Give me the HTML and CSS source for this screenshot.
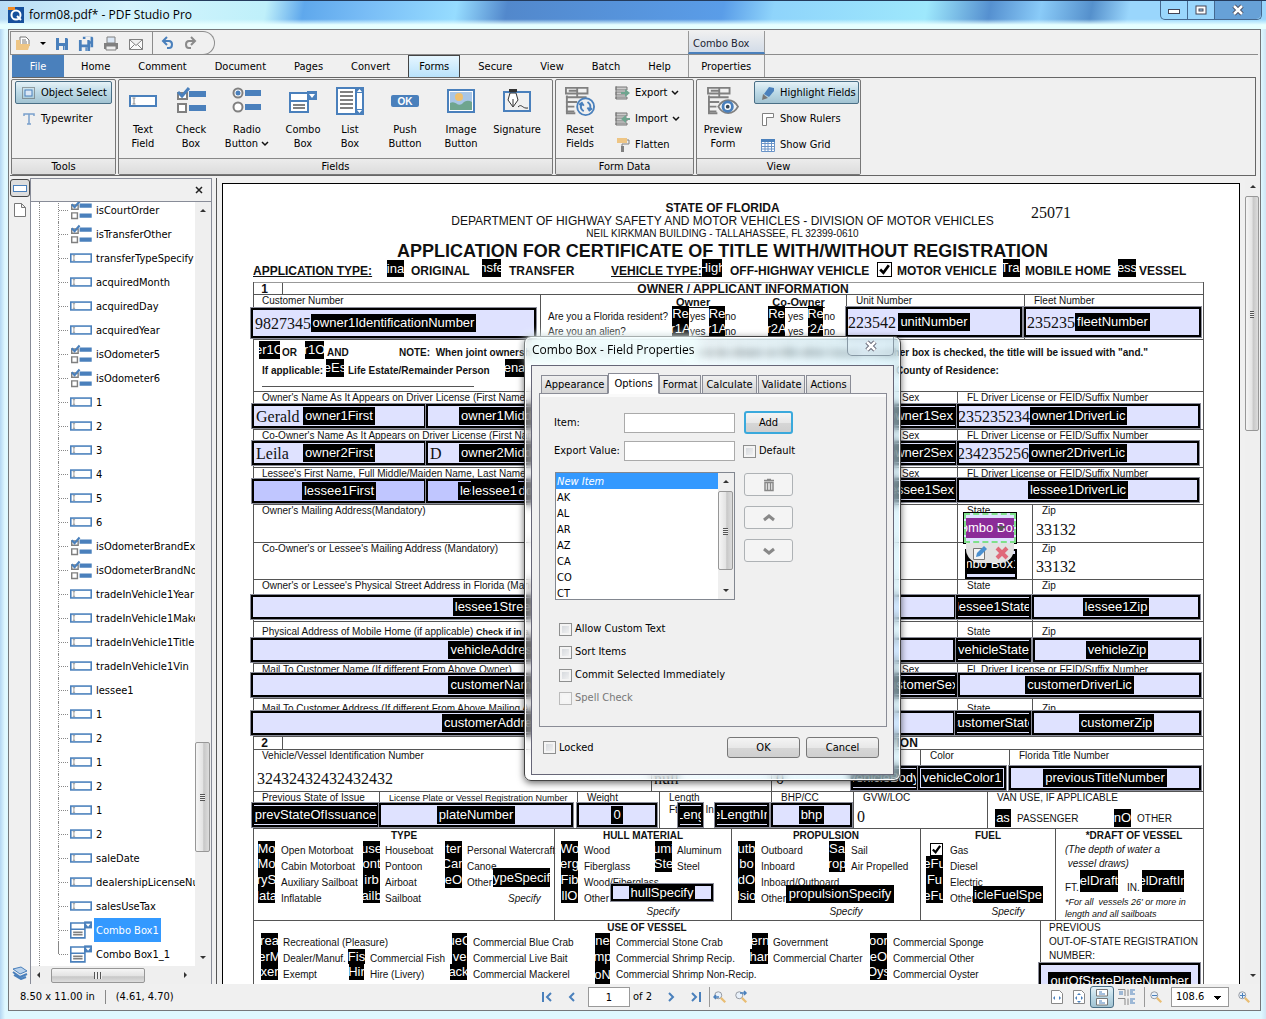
FILE: index.html
```html
<!DOCTYPE html>
<html lang="en">
<head>
    <meta charset="UTF-8">
    <meta name="viewport" content="width=device-width, initial-scale=1.0">
    <title>form08.pdf* - PDF Studio Pro</title>
    <link rel="stylesheet" href="styles.css">
</head>
<body>
    <!-- shared icons -->
    <svg width="0" height="0" class="defs">
        <symbol id="i-text" viewBox="0 0 28 12"><rect x="1" y="1" width="26" height="10" fill="#fff" stroke="#4a80bc" stroke-width="2"/><path d="M3.500 3h3M5 3v6M3.500 9h3" stroke="#888" fill="none"/></symbol>
        <symbol id="i-check" viewBox="0 0 30 28"><path d="M2 7h9v6H2zM2 18h8v8H2z" fill="#fff" stroke="#808080" stroke-width="2"/><path d="M2 6l4 4 7-8" fill="none" stroke="#4a80bc" stroke-width="3"/><path d="M13 5h17v6H13zM13 19h17v6H13z" fill="#4a80bc"/></symbol>
        <symbol id="i-radio" viewBox="0 0 30 28"><circle cx="6" cy="7" r="4.500" fill="#fff" stroke="#808080" stroke-width="2"/><circle cx="6" cy="7" r="2.500" fill="#4a80bc"/><circle cx="6" cy="21" r="4.500" fill="#fff" stroke="#808080" stroke-width="2"/><path d="M13 4h16v6H13zM13 18h16v6H13z" fill="#4a80bc"/></symbol>
        <symbol id="i-combo" viewBox="0 0 28 24"><path d="M1 3h18v19H1zM1 11h18" fill="#fff" stroke="#4a80bc" stroke-width="2"/><path d="M18 1h10v9H18z" fill="#4a80bc"/><path d="M20 4h6l-3 4z" fill="#fff"/><path d="M4 15h12M4 18h12" stroke="#808080" stroke-width="2"/></symbol>
        <symbol id="i-list" viewBox="0 0 28 28"><path d="M1 1h26v26H1zM20 1v26" fill="#fff" stroke="#4a80bc" stroke-width="2"/><path d="M4 5h13M4 9h13M4 13h13M4 17h13M4 21h13" stroke="#808080" stroke-width="2"/><path d="M20 1h7v5h-7zM20 22h7v5h-7z" fill="#4a80bc"/><path d="M21 5l2.500-3L26 5zM21 23l2.500 3L26 23z" fill="#fff"/></symbol>
        <symbol id="i-form" viewBox="0 0 32 32"><path d="M1 2h23v6H1zM1 12h22M1 17h12M1 22h9M1 27h9" fill="none" stroke="#808080" stroke-width="2"/><path d="M4 5h8M13 2v10M2 10v19h9" stroke="#808080" stroke-width="2" fill="none"/></symbol>
        <symbol id="i-io" viewBox="0 0 16 16"><path d="M1 2h11v3H1zM1 7h11v3H1zM1 12h11v2H1zM1 1v13" fill="#ccc" stroke="#777"/></symbol>
        <symbol id="i-chev" viewBox="0 0 8 6"><path d="M1 1l3 3 3-3" fill="none" stroke="#111" stroke-width="1.500"/></symbol>
        <symbol id="i-zoom" viewBox="0 0 16 16"><circle cx="6" cy="6" r="4" fill="#e9f1fa" stroke="#8a8f98"/><path d="M9 9l5 5" stroke="#e9bd73" stroke-width="2.500"/></symbol>
        <symbol id="i-disk" viewBox="0 0 14 14"><path d="M1 1h11l1 1v11H1z" fill="#4a80bc"/><path d="M4 1h6v5H4zM4 9h6v4H4z" fill="#f0f0f0"/><path d="M8 9h1.500v4H8z" fill="#4a80bc"/></symbol>
    </svg>

    <div class="window">
        <header class="titlebar">
            <svg class="logo" width="16" height="16"><rect width="16" height="16" fill="#16509c"/><path d="M0 0h7v3H0z" fill="#f08a24"/><circle cx="8" cy="8" r="4.500" fill="none" stroke="#fff" stroke-width="2"/><path d="M9 9l4 4" stroke="#fff" stroke-width="2"/></svg>
            <span class="caption">form08.pdf* - PDF Studio Pro</span>
            <div class="window-buttons">
                <button type="button" aria-label="Minimize"><svg width="12" height="12"><rect x=".5" y="5.500" width="11" height="4" fill="#fff" stroke="#445"/></svg></button>
                <button type="button" aria-label="Maximize"><svg width="12" height="12"><path d="M2.500 3.500h7v5h-7z" fill="none" stroke="#445" stroke-width="4"/><path d="M2.500 3.500h7v5h-7z" fill="none" stroke="#fff" stroke-width="2"/></svg></button>
                <button type="button" class="win-close" aria-label="Close"><svg width="12" height="12"><path d="M2 2l8 8M10 2l-8 8" stroke="#445" stroke-width="4.500"/><path d="M2 2l8 8M10 2l-8 8" stroke="#fff" stroke-width="2.500"/></svg></button>
            </div>
        </header>

        <div class="client">
            <div class="quickbar">
                <div class="quick-group">
                    <button type="button" aria-label="Open"><svg width="16" height="16"><path d="M5 10V1h6l3 3v6" fill="#fff" stroke="#777"/><path d="M7 4h4M7 6h5M7 8h5" stroke="#777"/><path d="M1 14V4h4v4h10l-2 6z" fill="#eec584"/></svg></button>
                    <button type="button" aria-label="Recent files"><svg width="6" height="4"><path d="M0 0h6L3 3z"/></svg></button>
                    <button type="button" aria-label="Save"><svg width="14" height="14"><use href="#i-disk"/></svg></button>
                    <button type="button" aria-label="Save all"><svg width="16" height="16"><use href="#i-disk" x="4" y="0" width="12" height="12"/><path d="M0 3h12v13H0z" fill="#f0f0f0"/><use href="#i-disk" x="0" y="3" width="13" height="13"/></svg></button>
                    <button type="button" aria-label="Print"><svg width="16" height="16"><path d="M4 1h8v6H4z" fill="#dbe7f5" stroke="#808080"/><path d="M1 7h14v6H1z" fill="#808080"/><path d="M3 10h10v4H3z" fill="#eee" stroke="#808080"/></svg></button>
                    <button type="button" aria-label="E-mail"><svg width="16" height="14"><path d="M1.500 2.500h13v10h-13zM1.500 2.500l6.500 6 6.500-6M1.500 12.500l5-5M14.500 12.500l-5-5" fill="#fafafa" stroke="#808080"/></svg></button>
                </div>
                <div class="quick-group quick-end">
                    <button type="button" aria-label="Undo"><svg width="16" height="14"><path d="M3 5h6c4 0 4 7 0 7H7M7 1L3 5l4 4" fill="none" stroke="#4a80bc" stroke-width="2"/></svg></button>
                    <button type="button" aria-label="Redo"><svg width="16" height="14"><path d="M12 5H6c-4 0-4 7 0 7h2M8 1l4 4-4 4" fill="none" stroke="#8a8a8a" stroke-width="2"/></svg></button>
                </div>
                <div class="context-title">Combo Box</div>
            </div>

            <nav class="tabs">
                <button type="button" class="tab file">File</button>
                <button type="button" class="tab">Home</button>
                <button type="button" class="tab">Comment</button>
                <button type="button" class="tab">Document</button>
                <button type="button" class="tab">Pages</button>
                <button type="button" class="tab">Convert</button>
                <button type="button" class="tab active">Forms</button>
                <button type="button" class="tab">Secure</button>
                <button type="button" class="tab">View</button>
                <button type="button" class="tab">Batch</button>
                <button type="button" class="tab">Help</button>
                <button type="button" class="tab context">Properties</button>
            </nav>

            <div class="ribbon">
                <section class="group tools">
                    <div class="group-body stack">
                        <button type="button" class="small pressed"><svg width="16" height="14"><rect x="1.500" y="1.500" width="12" height="11" fill="none" stroke="#555" stroke-dasharray="1 1"/><rect x="4" y="4" width="7" height="6" fill="#dbe7f5" stroke="#4a80bc"/></svg>Object Select</button>
                        <button type="button" class="small"><svg width="16" height="14"><path d="M3 4V2h10v2M8 2v10M6 12h4" fill="none" stroke="#7aa0cc" stroke-width="1.500"/></svg>Typewriter</button>
                    </div>
                    <h2>Tools</h2>
                </section>
                <section class="group fields">
                    <div class="group-body">
                        <button type="button" class="big"><svg width="28" height="30"><use href="#i-text" y="9" width="28" height="12"/></svg>Text<br>Field</button>
                        <button type="button" class="big"><svg width="30" height="30"><use href="#i-check" width="30" height="28"/></svg>Check<br>Box</button>
                        <button type="button" class="big wide"><svg width="30" height="30"><use href="#i-radio" width="30" height="28"/></svg>Radio<br>Button <svg class="chev" width="8" height="6"><use href="#i-chev"/></svg></button>
                        <button type="button" class="big"><svg width="28" height="30"><use href="#i-combo" y="4" width="28" height="24"/></svg>Combo<br>Box</button>
                        <button type="button" class="big narrow"><svg width="28" height="30"><use href="#i-list" width="28" height="28" y="1"/></svg>List<br>Box</button>
                        <button type="button" class="big wide"><svg width="28" height="30"><rect y="9" width="28" height="12" rx="2" fill="#4a80bc"/><text x="14" y="19" text-anchor="middle" class="ok-text">OK</text></svg>Push<br>Button</button>
                        <button type="button" class="big"><svg width="28" height="30"><rect x="1" y="4" width="26" height="22" fill="#fff" stroke="#4a80bc" stroke-width="2"/><path d="M3 6h22v18H3z" fill="#a9c6e6"/><circle cx="12" cy="11" r="4" fill="#eec070"/><path d="M3 17c6-3 7 4 12 1 3-4 7-4 10-2v8H3z" fill="#6fa58f"/></svg>Image<br>Button</button>
                        <button type="button" class="big wide"><svg width="30" height="30"><rect x="2" y="6" width="26" height="19" fill="none" stroke="#4a80bc" stroke-width="2"/><path d="M7 3h8v3H7z" fill="#333"/><path d="M8 7h6l2 7-5 7-5-7z" fill="#fff" stroke="#333"/><path d="M11 20v-7M16 21c4-4 4 2 10 1" fill="none" stroke="#333"/></svg>Signature</button>
                    </div>
                    <h2>Fields</h2>
                </section>
                <section class="group form-data">
                    <div class="group-body">
                        <button type="button" class="big"><svg width="32" height="30" viewBox="0 0 32 32"><use href="#i-form" width="32" height="32"/><circle cx="22" cy="22" r="9" fill="#f0f0f0" stroke="#4a80bc" stroke-width="2"/><path d="M20 27c-3-2-4-5-2-8M15 20l3-2 2 3M24 17c3 2 4 5 2 8M29 24l-3 2-2-3" fill="none" stroke="#4a80bc" stroke-width="2"/></svg>Reset<br>Fields</button>
                        <div class="stack">
                            <button type="button" class="small"><svg width="16" height="16"><use href="#i-io"/><path d="M6 7h4V4l5 4-5 4V9H6z" fill="#6fa58f"/></svg>Export <svg class="chev" width="8" height="6"><use href="#i-chev"/></svg></button>
                            <button type="button" class="small"><svg width="16" height="16"><use href="#i-io"/><path d="M15 7h-4V4L6 8l5 4V9h4z" fill="#6fa58f"/></svg>Import <svg class="chev" width="8" height="6"><use href="#i-chev"/></svg></button>
                            <button type="button" class="small"><svg width="16" height="16"><path d="M2 1h10v5H2z" fill="#eec584"/><path d="M12 3h2v4H7v3" fill="none" stroke="#808080"/><path d="M6 9h3v6H6z" fill="#808080"/></svg>Flatten</button>
                        </div>
                    </div>
                    <h2>Form Data</h2>
                </section>
                <section class="group view">
                    <div class="group-body">
                        <button type="button" class="big"><svg width="34" height="30" viewBox="0 0 34 32"><use href="#i-form" width="32" height="32"/><path d="M12 22c5-9 16-9 21 0-5 9-16 9-21 0z" fill="#f4f4f4" stroke="#808080" stroke-width="2"/><circle cx="22" cy="22" r="5" fill="#fff" stroke="#4a80bc" stroke-width="3"/><circle cx="22" cy="22" r="2" fill="#345"/></svg>Preview<br>Form</button>
                        <div class="stack">
                            <button type="button" class="small pressed"><svg width="16" height="16"><path d="M9 2l5 1v3l-5 6-5-3z" fill="#4a80bc"/><path d="M3 9l5 4-6 2z" fill="#777"/></svg>Highlight Fields</button>
                            <button type="button" class="small"><svg width="16" height="16"><path d="M2.500 14.500v-12h11v4h-7v8z" fill="#fff" stroke="#808080"/></svg>Show Rulers</button>
                            <button type="button" class="small"><svg width="16" height="16"><path d="M1.500 2.500h13v12h-13zM1.500 6.500h13M1.500 9.500h13M1.500 12h13M5 5v9M8 5v9M11.500 5v9" fill="#fff" stroke="#6a94c8"/><path d="M1 2h14v3H1z" fill="#4a80bc"/></svg>Show Grid</button>
                        </div>
                    </div>
                    <h2>View</h2>
                </section>
            </div>

            <main class="workspace">
                <aside class="strip">
                    <button type="button" class="strip-active" aria-label="Fields"><svg width="14" height="7"><rect x=".5" y=".5" width="13" height="6" fill="#fff" stroke="#4a80bc"/></svg></button>
                    <button type="button" aria-label="Pages"><svg width="12" height="14"><path d="M.5.500h7l4 4v9H.5zM7.500.500v4h4" fill="#fff" stroke="#777"/></svg></button>
                    <button type="button" class="strip-last" aria-label="Layers"><svg width="16" height="14"><path d="M1 3l8-2 6 4-7 3z" fill="#b9d2ec" stroke="#4a80bc"/><path d="M1 6l7 5 7-3M2 9l7 4 5-2" fill="none" stroke="#4a80bc" stroke-width="2"/></svg></button>
                </aside>

                <div class="panel">
                    <div class="panel-head"><button type="button" aria-label="Close panel"><svg width="8" height="8"><path d="M1 1l6 6M7 1L1 7" stroke="#222" stroke-width="1.500"/></svg></button></div>
                    <div class="panel-body">
                        <ul class="tree" id="tree"></ul>
                        <div class="vbar"><i class="up"></i><i class="thumb tree-thumb"></i><i class="down"></i></div>
                    </div>
                    <div class="hbar"><i class="left"></i><i class="thumb"></i><i class="right"></i></div>
                </div>

                <div class="viewer">
                    <div class="page" id="page">
                        <div class="page-head">
                            <p class="state">STATE OF FLORIDA</p>
                            <p class="dept">DEPARTMENT OF HIGHWAY SAFETY AND MOTOR VEHICLES - DIVISION OF MOTOR VEHICLES</p>
                            <p class="addr">NEIL KIRKMAN BUILDING - TALLAHASSEE, FL 32399-0610</p>
                            <h1>APPLICATION FOR CERTIFICATE OF TITLE WITH/WITHOUT REGISTRATION</h1>
                        </div>
                        <div class="type-line">
                            <u>APPLICATION TYPE:</u><span>ORIGINAL</span><span>TRANSFER</span><u>VEHICLE TYPE:</u>
                            <span>OFF-HIGHWAY VEHICLE</span><span>MOTOR VEHICLE</span><span>MOBILE HOME</span><span>VESSEL</span>
                        </div>
                        <div class="form">
                            <div class="row section"><b>1</b><b>OWNER / APPLICANT INFORMATION</b></div>
                            <div class="row ids">
                                <div>Customer Number</div>
                                <div class="questions">
                                    <div class="q-head"><u>Owner</u><u>Co-Owner</u></div>
                                    <div class="q"><span>Are you a Florida resident?</span><span>yes</span><span>no</span><span>yes</span><span>no</span></div>
                                    <div class="q"><span>Are you an alien?</span><span>yes</span><span>no</span><span>yes</span><span>no</span></div>
                                </div>
                                <div>Unit Number</div>
                                <div>Fleet Number</div>
                            </div>
                            <div class="row notes">
                                <p><span>OR</span><span>AND</span><span>NOTE:&nbsp; When joint ownership, please indicate if "or" or "and" is to be shown on title when issued. If neither box is checked, the title will be issued with "and."</span></p>
                                <p><span>If applicable:</span><span>Life Estate/Remainder Person</span><span>County of Residence:</span></p>
                                <hr>
                            </div>
                            <div class="row owner"><div>Owner's Name As It Appears on Driver License (First Name, Full Middle/Maiden Name, Last Name)</div><div class="bare">Sex</div><div>FL Driver License or FEID/Suffix Number</div></div>
                            <div class="row owner"><div>Co-Owner's Name As It Appears on Driver License (First Name, Full Middle Name)</div><div class="bare">Sex</div><div>FL Driver License or FEID/Suffix Number</div></div>
                            <div class="row owner"><div>Lessee's First Name, Full Middle/Maiden Name, Last Name</div><div class="bare">Sex</div><div>FL Driver License or FEID/Suffix Number</div></div>
                            <div class="row address"><div>Owner's Mailing Address(Mandatory)</div><div>State</div><div>Zip</div></div>
                            <div class="row address"><div>Co-Owner's or Lessee's Mailing Address (Mandatory)</div><div>State</div><div>Zip</div></div>
                            <div class="row address"><div>Owner's or Lessee's Physical Street Address in Florida (Mandatory)</div><div>State</div><div>Zip</div></div>
                            <div class="row address low"><div>Physical Address of Mobile Home (if applicable) <b class="condensed">Check if in a park</b></div><div>State</div><div>Zip</div></div>
                            <div class="row owner"><div>Mail To Customer Name (If different From Above Owner)</div><div class="bare">Sex</div><div>FL Driver License or FEID/Suffix Number</div></div>
                            <div class="row address low"><div>Mail To Customer Address (If different From Above Mailing Address)</div><div>State</div><div>Zip</div></div>
                            <div class="row section"><b>2</b><b>MOTOR VEHICLE, MOBILE HOME OR VESSEL DESCRIPTION</b></div>
                            <div class="row vin"><div>Vehicle/Vessel Identification Number</div><div>Make</div><div>Year</div><div>Color</div><div>Florida Title Number</div></div>
                            <div class="row plate">
                                <div>Previous State of Issue</div><div class="tight">License Plate or Vessel Registration Number</div><div>Weight</div>
                                <div>Length<br>Ft. <span class="inches">In.</span></div><div>BHP/CC</div><div>GVW/LOC</div>
                                <div>VAN USE, IF APPLICABLE<p class="van"><span>PASSENGER</span><span>OTHER</span></p></div>
                            </div>
                            <div class="row vessel">
                                <div><h3>TYPE</h3>
                                    <div class="options type">
                                        <ul><li>Open Motorboat</li><li>Cabin Motorboat</li><li>Auxiliary Sailboat</li><li>Inflatable</li></ul>
                                        <ul><li>Houseboat</li><li>Pontoon</li><li>Airboat</li><li>Sailboat</li></ul>
                                        <ul><li>Personal Watercraft</li><li>Canoe</li><li>Other</li><li class="specify">Specify</li></ul>
                                    </div>
                                </div>
                                <div><h3>HULL MATERIAL</h3>
                                    <div class="options hull">
                                        <ul><li>Wood</li><li>Fiberglass</li><li>Wood/Fiberglass</li><li>Other</li></ul>
                                        <ul><li>Aluminum</li><li>Steel</li></ul>
                                    </div>
                                    <p class="specify">Specify</p>
                                </div>
                                <div><h3>PROPULSION</h3>
                                    <div class="options propulsion">
                                        <ul><li>Outboard</li><li>Inboard</li><li>Inboard/Outboard</li><li>Other</li></ul>
                                        <ul><li>Sail</li><li>Air Propelled</li></ul>
                                    </div>
                                    <p class="specify">Specify</p>
                                </div>
                                <div><h3>FUEL</h3>
                                    <div class="options"><ul><li>Gas</li><li>Diesel</li><li>Electric</li><li>Other</li></ul></div>
                                    <p class="specify">Specify</p>
                                </div>
                                <div class="draft"><h3>*DRAFT OF VESSEL</h3>
                                    <p>(The depth of water a<br>&nbsp;vessel draws)</p>
                                    <p class="ft"><span>FT.</span><span>IN.</span></p>
                                    <small>*For all&nbsp; vessels 26' or more in<br>length and all sailboats</small>
                                </div>
                            </div>
                            <div class="row use">
                                <div><h3>USE OF VESSEL</h3>
                                    <div class="options uses">
                                        <ul><li>Recreational (Pleasure)</li><li>Dealer/Manuf.</li><li>Exempt</li></ul>
                                        <ul><li>&nbsp;</li><li>Commercial Fish</li><li>Hire (Livery)</li></ul>
                                        <ul><li>Commercial Blue Crab</li><li>Commercial Live Bait</li><li>Commercial Mackerel</li></ul>
                                        <ul><li>Commercial Stone Crab</li><li>Commercial Shrimp Recip.</li><li>Commercial Shrimp Non-Recip.</li></ul>
                                        <ul><li>Government</li><li>Commercial Charter</li></ul>
                                        <ul><li>Commercial Sponge</li><li>Commercial Other</li><li>Commercial Oyster</li></ul>
                                    </div>
                                </div>
                                <div class="previous">PREVIOUS<br>OUT-OF-STATE REGISTRATION<br>NUMBER:</div>
                            </div>
                        </div>
                    </div>
                </div>
                <div class="vbar page-bar"><i class="up"></i><i class="thumb page-thumb"></i><i class="down"></i></div>
            </main>

            <footer class="status">
                <div class="status-left"><span>8.50 x 11.00 in</span><span class="coords">(4.61, 4.70)</span></div>
                <div class="status-nav">
                    <button type="button" aria-label="First page"><svg width="12" height="12"><path d="M2 1v10M10 2L6 6l4 4" fill="none" stroke="#4a80bc" stroke-width="2"/></svg></button>
                    <button type="button" aria-label="Previous page"><svg width="12" height="12"><path d="M8 2L4 6l4 4" fill="none" stroke="#4a80bc" stroke-width="2"/></svg></button>
                    <input type="text" value="1" id="page-number" aria-label="Page"><label for="page-number">of 2</label>
                    <button type="button" aria-label="Next page"><svg width="12" height="12"><path d="M4 2l4 4-4 4" fill="none" stroke="#4a80bc" stroke-width="2"/></svg></button>
                    <button type="button" aria-label="Last page"><svg width="12" height="12"><path d="M10 1v10M2 2l4 4-4 4" fill="none" stroke="#4a80bc" stroke-width="2"/></svg></button>
                    <button type="button" class="sep" aria-label="Previous view"><svg width="14" height="14"><use href="#i-zoom" width="14" height="14"/><path d="M6 7H1m2-2L1 7l2 2" fill="none" stroke="#4a80bc" stroke-width="1.500"/></svg></button>
                    <button type="button" aria-label="Next view"><svg width="14" height="14"><use href="#i-zoom" width="14" height="14"/><path d="M6 3h6m-2-2l2 2-2 2" fill="none" stroke="#4a80bc" stroke-width="1.500"/></svg></button>
                </div>
                <div class="status-view">
                    <button type="button" aria-label="Fit width"><svg width="14" height="16"><path d="M1.500 1.500h8l3 3v10h-11z" fill="#fff" stroke="#888"/><path d="M3 9l2-2v4zM11 9L9 7v4z" fill="#4a80bc"/></svg></button>
                    <button type="button" aria-label="Fit page"><svg width="14" height="16"><path d="M1.500 1.500h8l3 3v10h-11z" fill="#fff" stroke="#888"/><path d="M3 9l2-2v4zM11 9L9 7v4zM7 4L5 6h4zM7 14l-2-2h4z" fill="#4a80bc"/></svg></button>
                    <button type="button" class="pressed" aria-label="Continuous"><svg width="14" height="18"><path d="M1.500 8V1.500h11V8zM1.500 17v-6.500h11V17z" fill="#fff" stroke="#777"/><path d="M4 4h3M4 6h6M4 13h3M4 15h6" stroke="#4a80bc"/></svg></button>
                    <button type="button" aria-label="Facing pages"><svg width="18" height="18"><path d="M0 1.500h7V8M10 8V1.500M0 10.500h7V17M10 17v-6.500" fill="none" stroke="#888"/><path d="M1 4h4M1 6h4M12 2h5M12 4h3M12 6h5M12 11h5M12 13h3M12 15h5" stroke="#4a80bc"/></svg></button>
                    <button type="button" class="sep" aria-label="Zoom out"><svg width="14" height="14"><use href="#i-zoom" width="14" height="14"/><path d="M3 5.500h5" stroke="#4a80bc"/></svg></button>
                    <select aria-label="Zoom"><option>108.6</option></select>
                    <button type="button" aria-label="Zoom in"><svg width="14" height="14"><use href="#i-zoom" width="14" height="14"/><path d="M3 5.500h5M5.500 3v5" stroke="#4a80bc"/></svg></button>
                </div>
            </footer>
        </div>

        <form class="dialog" role="dialog" aria-labelledby="dialog-title">
            <header><span id="dialog-title">Combo Box - Field Properties</span><button type="button" aria-label="Close"><svg width="12" height="12"><path d="M2 2l8 8M10 2l-8 8" stroke="#556" stroke-width="4.500"/><path d="M2 2l8 8M10 2l-8 8" stroke="#fff" stroke-width="2.500"/></svg></button></header>
            <div class="dialog-body">
                <div class="dialog-tabs">
                    <button type="button">Appearance</button><button type="button" class="current">Options</button><button type="button">Format</button><button type="button">Calculate</button><button type="button">Validate</button><button type="button">Actions</button>
                </div>
                <div class="dialog-panel">
                    <div class="item-grid">
                        <label for="item">Item:</label><input type="text" id="item"><button type="button" class="btn primary">Add</button>
                        <label for="export">Export Value:</label><input type="text" id="export"><label class="tick"><input type="checkbox">Default</label>
                    </div>
                    <div class="list-area">
                        <div class="listbox">
                            <ul><li class="new">New Item</li><li>AK</li><li>AL</li><li>AR</li><li>AZ</li><li>CA</li><li>CO</li><li>CT</li></ul>
                            <div class="vbar"><i class="up"></i><i class="thumb list-thumb"></i><i class="down"></i></div>
                        </div>
                        <div class="list-buttons">
                            <button type="button" class="btn" disabled aria-label="Delete"><svg width="12" height="14"><path d="M1 2.500h10M4 1.500h4M2 4.500h8v8H2zM4.500 5v7M7.500 5v7" fill="none" stroke="#888" stroke-width="1.500"/></svg></button>
                            <button type="button" class="btn" disabled aria-label="Move up"><svg width="14" height="10"><path d="M2 7l5-4 5 4" fill="none" stroke="#888" stroke-width="3"/></svg></button>
                            <button type="button" class="btn" disabled aria-label="Move down"><svg width="14" height="10"><path d="M2 3l5 4 5-4" fill="none" stroke="#888" stroke-width="3"/></svg></button>
                        </div>
                    </div>
                    <div class="checks">
                        <label class="tick"><input type="checkbox">Allow Custom Text</label>
                        <label class="tick"><input type="checkbox">Sort Items</label>
                        <label class="tick"><input type="checkbox">Commit Selected Immediately</label>
                        <label class="tick off"><input type="checkbox" disabled>Spell Check</label>
                    </div>
                </div>
                <div class="dialog-foot">
                    <label class="tick"><input type="checkbox">Locked</label>
                    <button type="button" class="btn">OK</button><button type="button" class="btn">Cancel</button>
                </div>
            </div>
        </form>
    </div>
    <script src="script.js"></script>
</body>
</html>
```
FILE: styles.css
```css
* { box-sizing: border-box; }
body { margin: 0; font: 11px/14px "DejaVu Sans Condensed", "Liberation Sans", sans-serif; color: #000; }
button, input, select { font: inherit; color: inherit; margin: 0; }
button { background: none; border: 0; padding: 0; }
ul, p, h1, h2, h3 { margin: 0; padding: 0; list-style: none; }
svg { display: block; flex: none; }
.defs { position: absolute; }

/* window frame */
.window { position: relative; height: 100vh; overflow: hidden; display: flex; flex-direction: column; padding: 0 5px 8px 8px; border-top: 1px solid #243b5c; background: linear-gradient(90deg, #b4d6f2, #dff8ff 5px, #dff8ff calc(100% - 5px), #cfe6f5); }
.titlebar { display: flex; align-items: center; flex: none; height: 28px; margin: 0 -5px 0 -8px; padding-left: 8px; background: linear-gradient(180deg, transparent 65%, #e6ffff 85%), linear-gradient(100deg, #b8dcf5 0, #d5f4fd 10%, #bff0fa 21%, #5fa8ec 24%, #79bdf6 29%, #96dcff 36%, #5288cc 40%, #5a9de8 57%, #8fd4fb 61%, #9ee8fc 73%, #5590d0 78%, #8acbf8 82%, #5590cc 86%, #9ad6fc 89%, #9ad6fc 100%); }
.caption { font: 12px/16px "Open Sans", sans-serif; padding: 0 5px; flex: 1; }
.window-buttons { display: flex; align-self: flex-start; margin-right: 4px; border: 1px solid #45688f; border-top: 0; border-radius: 0 0 5px 5px; }
.window-buttons button { display: flex; align-items: center; justify-content: center; width: 27px; height: 18px; border-right: 1px solid #45688f; }
.window-buttons .win-close { width: 46px; border: 0; background: rgba(70, 125, 190, .6); border-radius: 0 0 5px 0; }
.client { flex: 1; min-height: 0; display: flex; flex-direction: column; background: #f0f0f0; border: 1px solid #74777a; }

/* quick access bar */
.quickbar { display: flex; align-items: flex-start; height: 25px; flex: none; margin: 0 2px 0 1px; border-bottom: 1px solid #8c8c8c; padding-top: 1px; }
.quick-group { display: flex; align-items: center; height: 24px; gap: 9px; padding: 0 8px 0 4px; border: 1px solid #8c8c8c; border-width: 1px 1px 0; }
.quick-end { border-left: 0; border-radius: 0 12px 12px 0; padding: 0 15px 0 7px; gap: 7px; border-bottom-width: 1px; }
.context-title { margin-left: 473px; width: 77px; height: 23px; padding: 6px 4px 0; color: #1d2433; background: linear-gradient(#f0f0f0, #d3dce8); border: 1px solid #999; border-width: 0 1px 2px; border-bottom-color: #4a80bc; }

.tabs { display: flex; height: 23px; flex: none; align-items: flex-end; margin: 0 4px 0 3px; border-bottom: 1px solid #666; }
.tab { height: 22px; padding: 2px 14px 0; }
.tab.file { width: 52px; margin-right: 3px; color: #fff; background: #4a80bc; }
.tab.active { padding: 1px 10px 0; margin: 0 4px; border: 1px solid #444; border-bottom: 0; background: linear-gradient(#e6f6ff, #b9e2fb); }
.tab.context { width: 77px; margin-left: 3px; padding: 2px 0 0; border: 1px solid #999; border-width: 0 1px; }

.ribbon { display: flex; gap: 2px; height: 98px; flex: none; padding: 1px 0 0 1px; margin: 0 4px 0 1px; border-right: 1px solid #666; border-bottom: 1px solid #666; }
.group { display: flex; flex-direction: column; height: 96px; border: 1px solid #777; border-radius: 2px; }
.group-body { display: flex; flex: 1; align-items: flex-start; }
.group h2 { font: inherit; text-align: center; height: 16px; line-height: 16px; border-top: 1px solid #888; background: linear-gradient(#ececec, #dcdcdc); }
.tools { width: 105px; }
.fields { width: 435px; }
.form-data { width: 139px; }
.view { width: 165px; }
.stack { display: flex; flex-direction: column; align-items: flex-start; padding: 1px 0 0 3px; gap: 3px; }
.group-body > .stack { padding-left: 5px; }
.small { display: flex; align-items: center; gap: 4px; height: 23px; padding: 0 4px 0 5px; border: 1px solid transparent; border-radius: 2px; white-space: nowrap; }
.pressed { border-color: #4a6f86; background: linear-gradient(#e6f2f7, #bcd9e6 50%, #a2c3d2); }
.view .small { padding-right: 2px; }
.big { flex: none; width: 48px; padding-top: 6px; text-align: center; line-height: 14px; }
.big > svg { margin: 0 auto 7px; }
.big.wide { width: 64px; }
.big.narrow { width: 46px; }
.view .big { width: 52px; }
.big > svg.chev, .chev { display: inline; height: 6px; margin: 0; }
.ok-text { font: bold 10px "Liberation Sans", sans-serif; fill: #fff; }

/* workspace */
.workspace { flex: 1; min-height: 0; display: flex; padding-top: 2px; }
.strip { width: 21px; display: flex; flex-direction: column; align-items: center; gap: 6px; padding-top: 1px; }
.strip-active { width: 20px; height: 18px; padding: 0 2px; border: 1px solid #444; border-radius: 3px; background: #ddd; }
.strip-last { margin: auto 0 4px; }
.panel { width: 182px; display: flex; flex-direction: column; border: 1px solid #888c98; border-bottom: 0; }
.panel-head { display: flex; justify-content: flex-end; align-items: center; height: 23px; padding-right: 8px; border-bottom: 1px solid #888c98; }
.panel-body { flex: 1; min-height: 0; display: flex; background: #fff; }
.tree { flex: 1; min-width: 0; overflow: hidden; margin-left: 8px; border-left: 1px dotted #888; }
.tree li { display: flex; align-items: center; height: 24px; margin-left: 18px; border-left: 1px dotted #888; white-space: nowrap; }
.tree li:first-child { margin-top: -4px; }
.tree li::before { content: ""; flex: none; width: 9px; border-top: 1px dotted #888; margin-right: 2px; }
.tree li svg { width: 22px; height: 20px; margin-right: 2px; }
.tree li span { padding: 6px 2px 4px; }
.tree li.selected span { color: #fff; background: #3399ff; }
.tree li:last-child { border-image: linear-gradient(#888 50%, transparent 50%) 1; }

.vbar, .hbar { display: flex; align-items: center; justify-content: space-between; background: #efefef; }
.vbar { position: relative; flex-direction: column; width: 16px; padding: 7px 0; }
.hbar { position: relative; height: 18px; padding: 0 24px 0 6px; }
.vbar i, .hbar i { display: block; }
.up { border: 3px solid transparent; border-top: 0; border-bottom-color: #333; }
.down { border: 3px solid transparent; border-bottom: 0; border-top-color: #333; }
.left { border: 3px solid transparent; border-left: 0; border-right-color: #333; }
.right { border: 3px solid transparent; border-right: 0; border-left-color: #333; }
.thumb { border: 1px solid #979797; border-radius: 2px; background: linear-gradient(90deg, #f5f5f5, #e4e4e4 50%, #c8c8c8 60%, #ddd); }
.vbar .thumb { position: absolute; left: 0; right: 1px; }
.thumb::after { content: ""; display: block; position: absolute; left: 4px; right: 4px; top: calc(50% - 3px); height: 7px; background: repeating-linear-gradient(#555 0 1px, #eee 1px 2px); }
.tree-thumb { bottom: 114px; height: 110px; }
.page-thumb { top: 18px; height: 235px; }
.list-thumb { top: 18px; height: 79px; }
.hbar .thumb { position: relative; width: 94px; height: 15px; margin-right: 28px; background: linear-gradient(#f5f5f5, #e4e4e4 50%, #c8c8c8 60%, #ddd); }
.hbar .thumb::after { left: 42px; right: 42px; top: 3px; background: repeating-linear-gradient(90deg, #555 0 1px, #eee 1px 3px); }
.page-bar { width: 15px; }

/* document page */
.viewer { flex: 1; min-width: 0; overflow: hidden; margin-left: 4px; padding: 5px 5px 0; border-left: 1px solid #555; }
.page { position: relative; height: 1200px; padding: 18px 0 0 30px; border: 1px solid #000; background: #fff; font: 10px/12px "Liberation Sans", sans-serif; color: #111; }
.page-head { text-align: center; width: 939px; }
.page-head .state { font: bold 12px/13px "Liberation Sans", sans-serif; }
.page-head .dept { font-size: 12px; line-height: 13px; }
.page-head .addr { font-size: 10px; line-height: 12px; }
.page h1 { font-size: 18px; line-height: 22px; white-space: nowrap; }
.type-line { display: grid; grid-template-columns: 158px 98px 102px 119px 167px 128px 114px auto; font-weight: bold; font-size: 12px; line-height: 18px; height: 20px; white-space: nowrap; }
.form { display: grid; width: 951px; grid-template-rows: 12px 45px 52px 38px 38px 37px 38px 37px 42px 42px 35px 38px 13px 42px 37px 92px 280px; border: 1px solid #555; border-top: 0; }
.row { display: grid; border-top: 1px solid #555; min-width: 0; }
.row:first-child { border-top-color: #999; }
.row > div { border-left: 1px solid #555; padding-left: 9px; white-space: nowrap; min-width: 0; }
.row > div:first-child, .row > .bare { border-left: 0; }
.row > div:first-child { padding-left: 8px; }
.row.low > div { padding-top: 4px; }
.section { grid-template-columns: 29px 1fr; font-size: 12px; line-height: 12px; text-align: center; }
.section b:first-child { border-right: 1px solid #555; padding-right: 7px; }
.ids { grid-template-columns: 286px 306px 178px 1fr; }
.row > .questions { padding-left: 7px; }
.q-head { display: flex; gap: 62px; padding-left: 128px; font: bold 11px/14px "Liberation Sans", sans-serif; }
.q { display: grid; grid-template-columns: 142px 35px 63px 36px auto; line-height: 15px; }
.row.notes { display: block; padding-left: 8px; font-weight: bold; white-space: nowrap; }
.notes p { display: grid; grid-template-columns: 45px 72px auto; padding-left: 20px; padding-top: 4px; line-height: 18px; }
.notes p + p { grid-template-columns: 86px 548px auto; padding: 0; }
.notes hr { width: 212px; margin: 6px 0 0; border: 0; border-top: 1px solid #555; }
.owner { grid-template-columns: 639px 64px 1fr; }
.address { grid-template-columns: 703px 75px 1fr; }
.vin { grid-template-columns: 397px 120px 149px 89px 1fr; }
.plate { grid-template-columns: 125px 198px 82px 112px 82px 134px 1fr; }
.row > .tight { font-size: 9px; }
.condensed { font-size: 9px; }
.inches { margin-left: 22px; }
.van { display: grid; grid-template-columns: 120px auto; padding: 7px 0 0 20px; line-height: 16px; }
.vessel { grid-template-columns: 300px 177px 189px 135px 1fr; }
.vessel, .use { line-height: 16px; }
.vessel h3, .use h3 { font-size: 10px; line-height: 14px; text-align: center; }
.vessel > div:not(.draft), .vessel > div:first-child, .use > div:first-child { padding-left: 0; }
.options { display: grid; padding-left: 29px; }
.options.type { grid-template-columns: 104px 82px auto; padding-left: 27px; }
.options.hull { grid-template-columns: 93px auto; }
.options.propulsion { grid-template-columns: 90px auto; }
.options.uses { grid-template-columns: 87px 103px 143px 157px 120px auto; padding-left: 29px; }
.specify { font-style: italic; padding-left: 41px; }
p.specify { padding-left: 0; margin-top: -3px; text-align: center; text-indent: 40px; }
.draft p { font-style: italic; line-height: 14px; }
.draft .ft { display: flex; gap: 48px; height: 25px; font-style: normal; padding-top: 10px; }
.draft small { display: block; font-size: 9px; font-style: italic; line-height: 12px; }
.use { grid-template-columns: 786px 1fr; }
.row > .previous { padding-left: 8px; line-height: 14px; }

/* form fields placed on the page */
.field { position: absolute; display: flex; align-items: center; justify-content: center; overflow: hidden; border: 2px solid #000; background: #dfe2ff; box-shadow: 0 0 0 1px #8a8c99; }
.field b { font: 13px/18px "Liberation Sans", sans-serif; color: #fff; background: #000; padding: 0 2px; white-space: nowrap; }
.field.focus { background: #c0c6ff; }
.field.chip { border: 0; background: #000; box-shadow: none; }
.value { position: absolute; font: 16px/20px "Liberation Serif", serif; color: #111; }
.mark { position: absolute; background: #fff; border: 1px solid #000; }
.combo { position: absolute; z-index: 2; display: flex; align-items: center; justify-content: center; width: 52px; height: 30px; overflow: hidden; font: 13px/20px "Liberation Sans", sans-serif; color: #fff; white-space: nowrap; border: 2px solid #000; background: #dfe2ff; }
.combo b { font-weight: normal; background: #000; padding: 0 4px; }
.combo.picked { border: 2px dashed #7fe08a; outline: 1px solid #000; }
.combo.picked b { background: #8b2b98; }
.combo-arrow { position: absolute; right: 8px; top: 11px; }
.combo-tools { position: absolute; z-index: 3; display: flex; justify-content: center; gap: 8px; width: 48px; height: 20px; padding-top: 2px; background: #e2e2e2; border-radius: 0 0 14px 14px; }

/* status bar */
.status { display: grid; grid-template-columns: 1fr auto 1fr; align-items: center; height: 26px; flex: none; padding: 0 9px 0 11px; }
.status-left { display: flex; }
.coords { margin-left: 10px; padding-left: 10px; border-left: 1px solid #888; }
.status-nav { display: flex; align-items: center; gap: 13px; padding-left: 18px; }
.status-nav input { width: 42px; height: 20px; border: 1px solid #999; text-align: center; background: #fff; padding: 0; margin: 0 -10px 0 -3px; }
.sep { border-left: 1px solid #999; padding: 3px 0 3px 3px; margin: 0 -6px; }
.status-view { display: flex; align-items: center; justify-content: flex-end; gap: 8px; }
.status-view .pressed { border: 1px solid #4a6f86; border-radius: 3px; padding: 1px 4px; margin: 0 -4px; }
.status-view .sep { margin: 0; padding-left: 4px; }
.status-view select { width: 58px; height: 20px; padding: 0 4px; border: 1px solid #999; border-radius: 0; appearance: none; background: linear-gradient(#000, #000) no-repeat 42px 8px / 7px 1px, linear-gradient(#000, #000) no-repeat 43px 9px / 5px 1px, linear-gradient(#000, #000) no-repeat 44px 10px / 3px 1px, linear-gradient(#000, #000) no-repeat 45px 11px / 1px 1px, #fff; }

/* field properties dialog */
.dialog { position: absolute; left: 524px; top: 335px; width: 377px; height: 445px; z-index: 5; display: flex; flex-direction: column; padding: 0 6px 5px; border: 1px solid #444; border-radius: 7px; background: linear-gradient(90deg, rgba(255,255,255,.3), rgba(190,235,250,.45)); backdrop-filter: blur(4px); box-shadow: inset 0 0 0 1px #fff, 0 2px 7px rgba(0,0,0,.6); }
.dialog header { display: flex; justify-content: space-between; height: 28px; padding-left: 1px; font: 12px/28px "Open Sans", sans-serif; }
.dialog header span { background: rgba(240, 255, 255, .8); box-shadow: 0 0 10px 6px rgba(240, 255, 255, .8); height: 20px; margin-top: 3px; line-height: 20px; }
.dialog header button { width: 47px; height: 19px; display: flex; justify-content: center; align-items: center; border: 1px solid #8899a5; border-top: 0; border-radius: 0 0 5px 5px; background: rgba(230, 245, 255, .4); }
.dialog-body { flex: 1; padding: 7px 6px 6px 7px; background: #f0f0f0; border: 1px solid #667; display: flex; flex-direction: column; }
.dialog-tabs { display: flex; align-items: flex-end; height: 21px; margin: 0 0 -1px 2px; z-index: 1; }
.dialog-tabs button { height: 19px; padding: 0 3px; margin-right: 1px; border: 1px solid #8a8c96; background: linear-gradient(#f0f0f0, #d4d4d4); }
.dialog-tabs .current { height: 21px; padding: 0 5px; margin: 0 0 0 -1px; background: #fff; border-bottom-color: #fff; }
.dialog-panel { flex: 1; padding: 17px 14px 0; border: 1px solid #8a8c96; box-shadow: inset 0 3px #fafafa; }
.item-grid { display: grid; grid-template-columns: 70px 111px auto; row-gap: 6px; align-items: center; }
.item-grid > * { height: 22px; line-height: 22px; }
.item-grid > input { height: 20px; border: 1px solid #aaa; background: #fff; }
.item-grid .tick { margin-left: 8px; }
.btn { display: flex; align-items: center; justify-content: center; width: 73px; height: 21px; line-height: 14px; border: 1px solid #777; border-radius: 3px; background: linear-gradient(#f4f4f4, #e8e8e8 50%, #d6d6d6 55%, #cfcfcf); }
.btn.primary { width: 49px; height: 23px; margin-left: 9px; border: 2px solid #3aa9dc; line-height: 14px; }
.btn:disabled { border-color: #aeb2b5; background: #f4f4f4; }
.list-area { display: flex; gap: 9px; margin: 10px 0 0 1px; }
.listbox { display: flex; width: 180px; height: 128px; border: 1px solid #828790; background: #fff; }
.listbox ul { flex: 1; overflow: hidden; }
.listbox li { height: 16px; line-height: 17px; padding-left: 1px; }
.listbox .new { color: #fff; background: #3399ff; font-style: italic; }
.list-buttons { display: grid; gap: 10px; align-content: start; padding-top: 1px; }
.list-buttons .btn { width: 49px; height: 23px; }
.checks { display: grid; gap: 9px; padding: 22px 0 0 5px; }
.tick { display: flex; align-items: center; gap: 3px; }
.tick input { appearance: none; width: 13px; height: 13px; border: 1px solid #8e8f8f; background: linear-gradient(135deg, #cfd3d8, #f6f6f6); box-shadow: inset 0 0 0 2px #f4f4f4; }
.off { color: #777; }
.off input { border-color: #bbb; background: #f6f6f6; }
.dialog-foot { display: flex; align-items: center; gap: 6px; height: 41px; padding: 0 8px 0 4px; }
.dialog-foot .tick { flex: 1; }
```
FILE: script.js
```js
// icon, name
const tree = [
    ['check', 'isCourtOrder'], ['check', 'isTransferOther'], ['text', 'transferTypeSpecify'],
    ['text', 'acquiredMonth'], ['text', 'acquiredDay'], ['text', 'acquiredYear'],
    ['check', 'isOdometer5'], ['check', 'isOdometer6'],
    ['text', '1'], ['text', '2'], ['text', '3'], ['text', '4'], ['text', '5'], ['text', '6'],
    ['check', 'isOdometerBrandExceeds'], ['check', 'isOdometerBrandNot'],
    ['text', 'tradeInVehicle1Year'], ['text', 'tradeInVehicle1Make'],
    ['text', 'tradeInVehicle1Title'], ['text', 'tradeInVehicle1Vin'],
    ['text', 'lessee1'], ['text', '1'], ['text', '2'], ['text', '1'], ['text', '2'], ['text', '1'], ['text', '2'],
    ['text', 'saleDate'], ['text', 'dealershipLicenseNumber'], ['text', 'salesUseTax'],
    ['combo', 'Combo Box1'], ['combo', 'Combo Box1_1']
];

const treeEl = document.getElementById('tree');
tree.forEach(([icon, name]) => {
    const li = document.createElement('li');
    if (name === 'Combo Box1') li.className = 'selected';
    li.innerHTML = `<svg><use href="#i-${icon}"/></svg><span>${name}</span>`;
    treeEl.appendChild(li);
});

// window position of the page's top left corner
const origin = { x: 223, y: 184 };
const page = document.getElementById('page');

function place(el, x, y, right, bottom) {
    el.style.left = (x - origin.x) + 'px';
    el.style.top = (y - origin.y) + 'px';
    if (right) el.style.width = (right - x) + 'px';
    if (bottom) el.style.height = (bottom - y) + 'px';
    page.appendChild(el);
}

function addField(kind, x, y, right, bottom, name) {
    const el = document.createElement('div');
    el.className = 'field ' + kind;
    if (name) el.innerHTML = `<b>${name}</b>`;
    place(el, x, y, right, bottom);
}

function addValue(x, y, text) {
    const el = document.createElement('span');
    el.className = 'value';
    el.textContent = text;
    place(el, x, y);
}

// left, top, right, bottom, name
[
    [251, 308, 536, 338, 'owner1IdentificationNumber'],
    [846, 307, 1022, 337, 'unitNumber'], [1024, 307, 1201, 337, 'fleetNumber'],
    [252, 404, 426, 428, 'owner1First'], [426, 404, 577, 428, 'owner1Middle'],
    [884, 404, 957, 428, 'owner1Sex'], [957, 404, 1200, 428, 'owner1DriverLic'],
    [252, 441, 426, 465, 'owner2First'], [426, 441, 577, 465, 'owner2Middle'],
    [884, 441, 957, 465, 'owner2Sex'], [957, 441, 1199, 465, 'owner2DriverLic'],
    [884, 478, 957, 502, 'lessee1Sex'], [957, 478, 1199, 502, 'lessee1DriverLic'],
    [251, 595, 738, 619, 'lessee1Street'], [740, 595, 956, 619, ''],
    [956, 595, 1031, 619, 'lessee1State'], [1032, 595, 1200, 619, 'lessee1Zip'],
    [251, 638, 738, 662, 'vehicleAddress'], [740, 638, 955, 662, ''],
    [956, 638, 1031, 662, 'vehicleState'], [1033, 638, 1201, 662, 'vehicleZip'],
    [251, 673, 738, 697, 'customerName'], [884, 673, 957, 697, 'customerSex'],
    [958, 673, 1201, 697, 'customerDriverLic'],
    [251, 711, 738, 735, 'customerAddress'], [740, 711, 955, 735, ''],
    [955, 711, 1031, 735, 'customerState'], [1032, 711, 1201, 735, 'customerZip'],
    [851, 766, 918, 790, 'vehicleBody'], [918, 766, 1006, 790, 'vehicleColor1'],
    [1009, 766, 1201, 790, 'previousTitleNumber'],
    [252, 803, 379, 827, 'prevStateOfIssuance'], [379, 803, 573, 827, 'plateNumber'],
    [577, 803, 657, 827, '0'], [678, 803, 703, 827, 'Leng'], [715, 803, 769, 827, 'eLengthIn'],
    [771, 803, 852, 827, 'bhp'], [611, 884, 713, 901, 'hullSpecify'],
    [1039, 963, 1200, 998, 'outOfStatePlateNumber']
].forEach(f => addField('', ...f));

addField('focus', 252, 479, 426, 503, 'lessee1First');
addField('focus', 426, 479, 577, 503, 'lessee1Middle');
addField('chip', 471, 481, 518, 500, 'lessee1');

// small fields whose name is cut by the box
[
    [387, 260, 404, 277, 'ina'], [482, 259, 501, 277, 'nsfe'], [702, 259, 722, 277, 'High'],
    [1003, 259, 1020, 277, 'Trai'], [1118, 259, 1136, 277, 'ess'],
    [259, 341, 280, 359, 'er1O'], [305, 341, 324, 359, 'r1O'], [326, 359, 344, 377, 'eEs'], [505, 359, 524, 377, 'ena'],
    [672, 306, 689, 321, 'Re'], [709, 306, 725, 321, 'Re'], [768, 306, 785, 321, 'Re'], [808, 306, 823, 321, 'Re'],
    [672, 321, 689, 336, 'r1A'], [709, 321, 725, 336, 'r1A'], [768, 321, 785, 336, 'r2A'], [808, 321, 823, 336, 'r2A'],
    [995, 809, 1011, 827, 'as'], [1114, 809, 1131, 827, 'nO'],
    [258, 841, 275, 856, 'Mo'], [258, 856, 275, 872, 'Mo'], [258, 872, 275, 888, 'ryS'], [258, 888, 275, 903, 'lata'],
    [363, 841, 380, 856, 'use'], [363, 856, 380, 872, 'ont'], [363, 872, 380, 888, 'irb'], [363, 888, 380, 903, 'ailb'],
    [445, 841, 462, 856, 'ter'], [445, 856, 462, 872, 'Can'], [445, 872, 462, 888, 'eO'],
    [561, 841, 578, 856, 'Wo'], [561, 856, 578, 872, 'erg'], [561, 872, 578, 888, 'Fib'], [561, 888, 578, 903, 'llO'],
    [655, 841, 672, 856, 'umi'], [655, 856, 672, 872, 'Ste'],
    [738, 841, 755, 856, 'utb'], [738, 856, 755, 872, 'bo'], [738, 872, 755, 888, 'dO'], [738, 888, 755, 903, 'lsio'],
    [829, 841, 845, 856, 'Sa'], [829, 856, 845, 872, 'rop'],
    [926, 856, 943, 872, 'eFu'], [926, 872, 943, 888, 'Fu'], [926, 888, 943, 903, 'eFu'],
    [493, 868, 550, 887, 'ypeSpecif'], [786, 885, 894, 903, 'propulsionSpecify'], [973, 886, 1043, 903, 'icleFuelSpe'],
    [1080, 870, 1118, 892, 'elDraft'], [1142, 870, 1184, 892, 'elDraftIn'],
    [261, 933, 278, 949, 'rea'], [261, 949, 278, 964, 'erM'], [261, 964, 278, 980, 'xer'],
    [348, 949, 365, 964, 'Fis'], [349, 964, 364, 980, 'Hir'],
    [452, 933, 467, 949, 'ueC'], [452, 949, 467, 964, 've'], [450, 964, 467, 980, 'ack'],
    [595, 933, 610, 949, 'ne'], [595, 949, 610, 964, 'mp'], [595, 964, 610, 985, 'oN'],
    [752, 933, 768, 949, 'ern'], [750, 949, 768, 964, 'har'],
    [870, 933, 887, 949, 'oor'], [870, 949, 887, 964, 'eO'], [870, 964, 887, 980, 'Oys']
].forEach(f => addField('chip', ...f));

[
    [1031, 203, '25071'], [255, 314, '9827345'], [848, 313, '223542'], [1027, 313, '235235'],
    [256, 407, 'Gerald'], [958, 407, '235235234'], [256, 444, 'Leila'], [430, 444, 'D'], [957, 444, '234235256'],
    [1036, 520, '33132'], [1036, 557, '33132'], [257, 769, '32432432432432432'],
    [654, 769, 'null'], [776, 769, '0'], [857, 807, '0']
].forEach(v => addValue(...v));

// ticked boxes
[[877, 262, 892, 277], [930, 843, 943, 856]].forEach(([x, y, r, b]) => {
    const el = document.createElement('div');
    el.className = 'mark';
    el.innerHTML = '<svg viewBox="0 0 12 12"><path d="M2 6l3 3 5-7" fill="none" stroke="#000" stroke-width="2.500"/></svg>';
    place(el, x, y, r, b);
});

// the two combo boxes, the first one is picked
const second = document.createElement('div');
second.className = 'combo';
second.innerHTML = '<b>mbo Box1</b>';
place(second, 965, 549);
const picked = document.createElement('div');
picked.className = 'combo picked';
picked.innerHTML = '<b>ombo Box</b><svg class="combo-arrow" width="10" height="6"><path d="M0 0h10L5 5z" fill="#555"/></svg>';
place(picked, 964, 513);
const tools = document.createElement('div');
tools.className = 'combo-tools';
tools.innerHTML = '<svg width="15" height="15"><path d="M1.500 3.500h11v11h-11z" fill="#f4f4f4" stroke="#777"/><path d="M4 12l1-4 7-7 3 3-7 7z" fill="#4a90d0"/></svg>' +
    '<svg width="14" height="15"><path d="M2 3l10 10M12 3L2 13" stroke="#e0697a" stroke-width="4"/></svg>';
place(tools, 966, 543);
```
